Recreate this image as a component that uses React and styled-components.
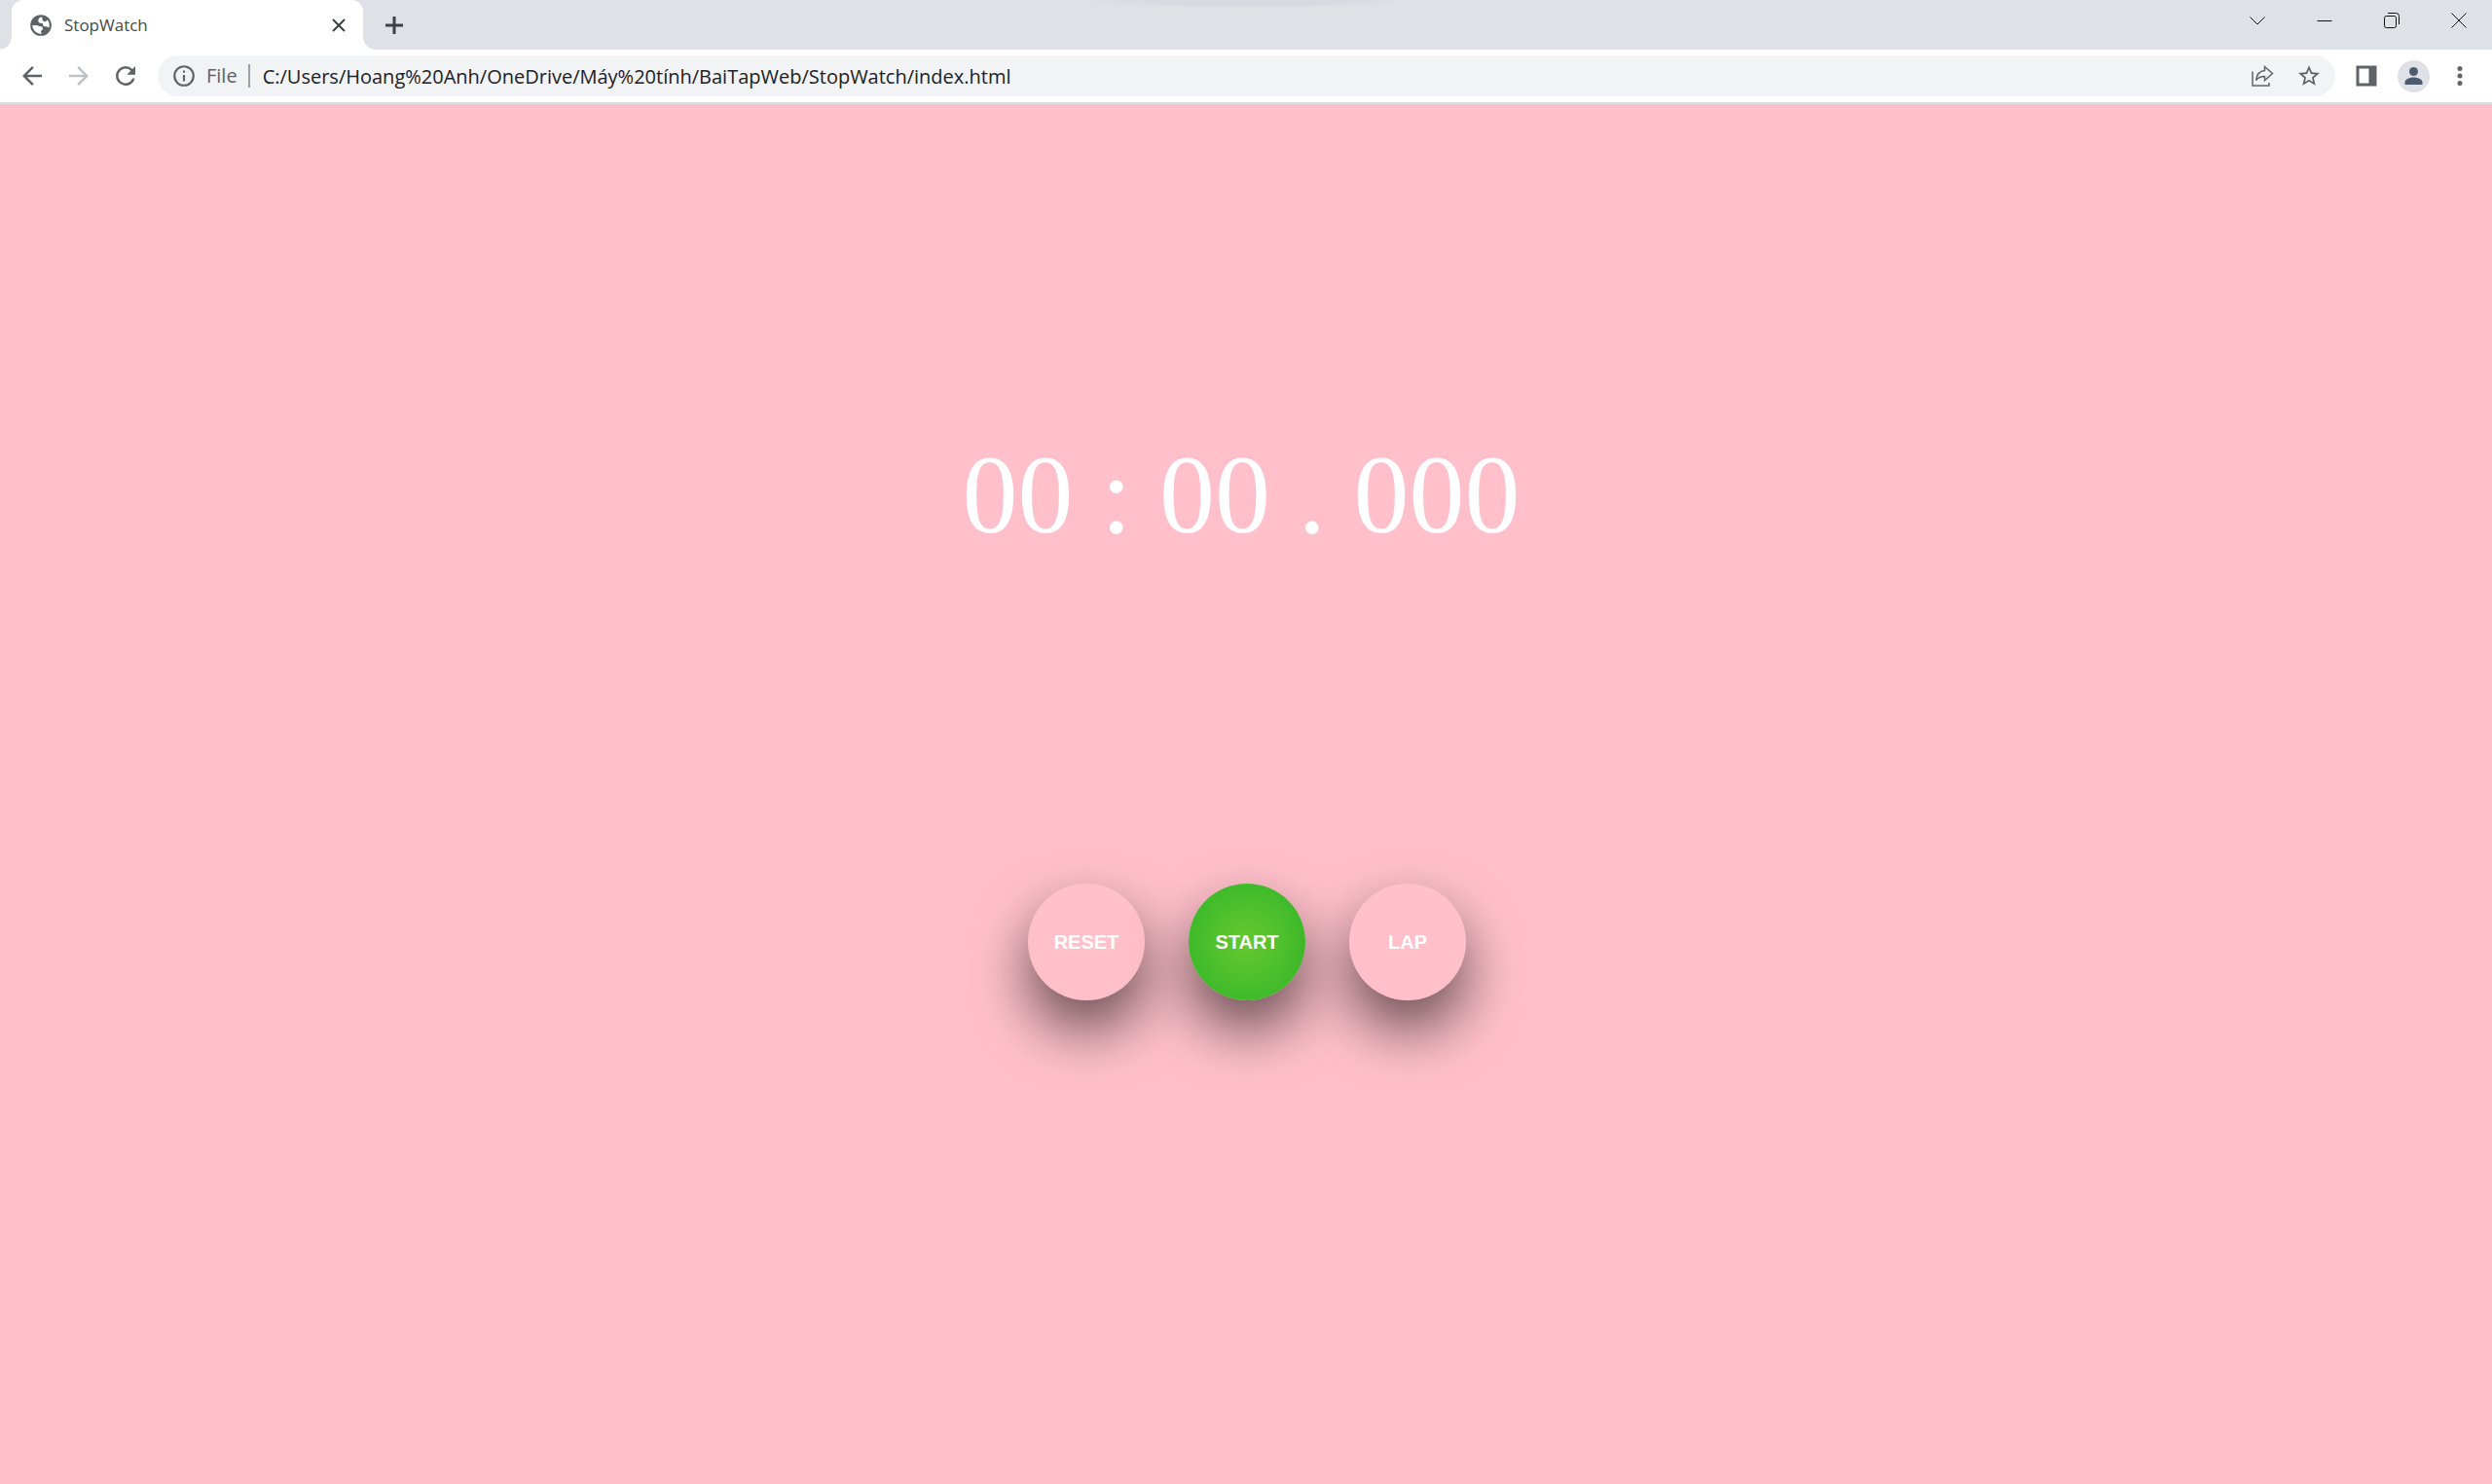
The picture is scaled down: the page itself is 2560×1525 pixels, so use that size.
import React, { useEffect, useRef, useState } from "react";
import styled, { createGlobalStyle } from "styled-components";

const GlobalStyle = createGlobalStyle`
  *, *::before, *::after { box-sizing: border-box; }
  body { margin: 0; background: #ffc0cb; }
`;

const uiFont = `"Open Sans", "Noto Sans", sans-serif`;

const Window = styled.div`
  display: flex;
  flex-direction: column;
  min-height: 100vh;
`;

const TabStrip = styled.header`
  display: flex;
  align-items: stretch;
  height: 51px;
  padding-left: 12px;
  background: radial-gradient(farthest-side at 50% 0, #d7dae0 60%, #dee1e6) top center / 340px 9px no-repeat #dee1e6;
`;

const Tab = styled.div`
  position: relative;
  display: flex;
  align-items: center;
  width: 361px;
  padding: 0 12px 0 17px;
  border-radius: 12px 12px 0 0;
  background: #fff;
  color: #5f6368;

  &::before, &::after {
    content: "";
    position: absolute;
    bottom: 0;
    width: 12px;
    height: 12px;
  }
  &::before {
    right: 100%;
    background: radial-gradient(circle at 0 0, transparent 11px, #fff 12px);
  }
  &::after {
    left: 100%;
    background: radial-gradient(circle at 100% 0, transparent 11px, #fff 12px);
  }
`;

const TabTitle = styled.span`
  flex: 1;
  padding-left: 11px;
  color: #45494d;
  font: 400 17px/24px ${uiFont};
`;

const IconButton = styled.button`
  display: flex;
  align-items: center;
  justify-content: center;
  flex: none;
  width: ${(p) => p.$width || 48}px;
  height: ${(p) => p.$height || 42}px;
  padding: 0;
  border: 0;
  background: none;
  color: ${(p) => p.$color || "#5f6368"};
`;

const NewTab = styled(IconButton)`
  align-self: center;
  margin-left: 8px;
`;

const WindowControls = styled.div`
  display: flex;
  margin-left: auto;
`;

const Toolbar = styled.nav`
  display: flex;
  align-items: center;
  height: 56px;
  padding: 0 9px;
  border-bottom: 2px solid #dadce0;
  background: #fff;
`;

const AddressBar = styled.form`
  display: flex;
  align-items: center;
  flex: 1;
  height: 42px;
  margin: 0 8px 0 9px;
  padding: 0 3px 0 14px;
  border-radius: 21px;
  background: #f1f3f4;
  color: #5f6368;
`;

const Scheme = styled.label`
  margin-left: 10px;
  padding-right: 11px;
  border-right: 2px solid #9aa0a6;
  font: 400 20px/24px ${uiFont};
`;

const Address = styled.input`
  flex: 1;
  min-width: 0;
  height: 36px;
  margin: 0;
  padding: 0 0 0 13px;
  border: 0;
  outline: 0;
  background: none;
  color: #202124;
  font: 400 20px/28px ${uiFont};
`;

const Avatar = styled.span`
  display: flex;
  border-radius: 50%;
  background: #dee1e6;
  color: #4f5b70;
`;

const Page = styled.main`
  display: flex;
  flex: 1;
  flex-direction: column;
  align-items: center;
  padding: 336px 20px 60px 22px;
  background: #ffc0cb;
`;

const Clock = styled.div`
  padding-right: 12px;
  color: #fff;
  font: 400 114px/132px "Liberation Serif", "Times New Roman", serif;
  white-space: nowrap;
`;

const Controls = styled.div`
  display: flex;
  gap: 45px;
  margin-top: 333px;
`;

const RoundButton = styled.button`
  width: 120px;
  height: 120px;
  padding: 0;
  border: 0;
  border-radius: 50%;
  background: ${(p) => (p.$primary ? "radial-gradient(#66c92f, #2fb428)" : "#ffc0cb")};
  box-shadow: 0 30px 60px rgba(0, 0, 0, 0.6);
  color: #fff;
  font: 700 20px/24px "Liberation Sans", Arial, sans-serif;
`;

const Laps = styled.ol`
  margin: 40px 0 0;
  padding: 0;
  list-style: none;
  color: #fff;
  font: 400 30px/40px "Liberation Serif", serif;
`;

function Icon({ size = 30, box = 24, children }) {
  return (
    <svg width={size} height={size} viewBox={`0 0 ${box} ${box}`} fill="currentColor" aria-hidden="true">
      {children}
    </svg>
  );
}

function Line({ d, size = 24, width = 2 }) {
  return (
    <Icon size={size}>
      <path d={d} fill="none" stroke="currentColor" strokeWidth={width} />
    </Icon>
  );
}

const pad = (n, len) => String(n).padStart(len, "0");
const format = (ms) =>
  `${pad(Math.floor(ms / 60000), 2)} : ${pad(Math.floor(ms / 1000) % 60, 2)} . ${pad(ms % 1000, 3)}`;

function StopWatch() {
  const [elapsed, setElapsed] = useState(0);
  const [running, setRunning] = useState(false);
  const [laps, setLaps] = useState([]);
  const base = useRef(0);

  useEffect(() => {
    if (!running) return undefined;
    const started = Date.now() - base.current;
    const id = setInterval(() => {
      base.current = Date.now() - started;
      setElapsed(base.current);
    }, 10);
    return () => clearInterval(id);
  }, [running]);

  const reset = () => {
    base.current = 0;
    setRunning(false);
    setElapsed(0);
    setLaps([]);
  };

  return (
    <Page>
      <Clock>{format(elapsed)}</Clock>
      <Controls>
        <RoundButton type="button" onClick={reset}>RESET</RoundButton>
        <RoundButton type="button" $primary onClick={() => setRunning(!running)}>
          {running ? "STOP" : "START"}
        </RoundButton>
        <RoundButton type="button" onClick={() => running && setLaps([...laps, elapsed])}>LAP</RoundButton>
      </Controls>
      {laps.length > 0 && (
        <Laps>
          {laps.map((lap, i) => <li key={i}>{format(lap)}</li>)}
        </Laps>
      )}
    </Page>
  );
}

export default function App() {
  return (
    <Window>
      <GlobalStyle />
      <TabStrip>
        <Tab>
          <Icon size={26}>
            <circle cx="12" cy="12" r="10" />
            <path
              fill="#fff"
              d="M12.500 4C10.500 4.800 9.500 6 9.500 7.500c0 1.800 1.300 2.500 3 2.500 1 0 1.500.7 1.500 1.500 0 1.200 1 1.700 2.300 1.700 1.500 0 2.700.5 3.300 1.300.3-.8.400-1.600.400-2.500 0-2-.7-3.800-1.900-5.200-.4 1.200-1.300 1.700-2.400 1.700-1.400 0-2.200-.8-2.200-2 0-.9-.3-1.700-1-2.500zM4 12c0 4.400 3.600 8 8 8 .4 0 .8 0 1.200-.1-1-.6-1.400-1.400-1.200-2.300.2-.8 1.800-1 1.800-2.400 0-1.400-1-2.200-2.600-2.200-1.500 0-1.700-1-3.200-1z"
            />
          </Icon>
          <TabTitle>StopWatch</TabTitle>
          <IconButton type="button" aria-label="Close tab" $width={26} $color="#3c4043">
            <Line d="M6 6 18 18M18 6 6 18" />
          </IconButton>
        </Tab>
        <NewTab type="button" aria-label="New tab" $color="#3c4043">
          <Line d="M12 3v18M3 12h18" width={3} />
        </NewTab>
        <WindowControls>
          <IconButton type="button" aria-label="Search tabs" $width={69} $color="#111">
            <Line d="M4.500 8.500 12 16 19.500 8.500" width={1} />
          </IconButton>
          <IconButton type="button" aria-label="Minimize" $width={69} $color="#111">
            <Line d="M4.500 12.500h15" width={1} />
          </IconButton>
          <IconButton type="button" aria-label="Restore" $width={69} $color="#111">
            <Line
              d="M6.500 7.500h8a2 2 0 0 1 2 2v8a2 2 0 0 1-2 2h-8a2 2 0 0 1-2-2v-8a2 2 0 0 1 2-2zM8 4.500h8.500a3 3 0 0 1 3 3V16"
              width={1}
            />
          </IconButton>
          <IconButton type="button" aria-label="Close" $width={69} $color="#111">
            <Line d="M4.500 4.500l15 15M19.500 4.500l-15 15" width={1} />
          </IconButton>
        </WindowControls>
      </TabStrip>

      <Toolbar>
        <IconButton type="button" aria-label="Back">
          <Icon><path d="M20 11H7.830l5.590-5.590L12 4l-8 8 8 8 1.410-1.410L7.830 13H20v-2z" /></Icon>
        </IconButton>
        <IconButton type="button" aria-label="Forward" $color="#bdc1c6">
          <Icon><path d="M12 4l-1.410 1.410L16.170 11H4v2h12.170l-5.580 5.590L12 20l8-8z" /></Icon>
        </IconButton>
        <IconButton type="button" aria-label="Reload">
          <Icon>
            <path d="M17.650 6.350A7.960 7.960 0 0 0 12 4a8 8 0 1 0 7.730 10h-2.080A6 6 0 1 1 12 6c1.660 0 3.140.69 4.220 1.780L13 11h7V4l-2.350 2.350z" />
          </Icon>
        </IconButton>
        <AddressBar onSubmit={(e) => e.preventDefault()}>
          <Icon size={26}>
            <path d="M11 7h2v2h-2zm0 4h2v6h-2zm1-9a10 10 0 1 0 0 20 10 10 0 0 0 0-20zm0 18a8 8 0 1 1 0-16 8 8 0 0 1 0 16z" />
          </Icon>
          <Scheme htmlFor="address">File</Scheme>
          <Address
            id="address"
            spellCheck={false}
            defaultValue="C:/Users/Hoang%20Anh/OneDrive/Máy%20tính/BaiTapWeb/StopWatch/index.html"
          />
          <IconButton type="button" aria-label="Share">
            <Icon size={24}>
              <g fill="none" stroke="currentColor" strokeWidth="1.500">
                <path d="M2 7.500V22h17v-3" />
                <path d="M14.500 2.500 22.500 9.500l-8 7v-4c-4 0-7 1.200-8.800 4C6.200 10.800 9 7 14.500 6.500z" />
              </g>
            </Icon>
          </IconButton>
          <IconButton type="button" aria-label="Bookmark this page">
            <Icon size={26}>
              <path d="M22 9.240l-7.190-.62L12 2 9.190 8.630 2 9.240l5.460 4.730L5.820 21 12 17.270 18.180 21l-1.630-7.030L22 9.240zM12 15.400l-3.760 2.270 1-4.280-3.320-2.880 4.380-.38L12 6.100l1.710 4.040 4.380.38-3.320 2.880 1 4.280L12 15.400z" />
            </Icon>
          </IconButton>
        </AddressBar>
        <IconButton type="button" aria-label="Side panel">
          <Icon size={24}><path d="M1.500 1.500h21v21h-21zM4.500 4.500v15h10v-15z" fillRule="evenodd" /></Icon>
        </IconButton>
        <IconButton type="button" aria-label="Profile">
          <Avatar>
            <Icon size={33} box={33}>
              <circle cx="16.500" cy="11.500" r="4.500" />
              <path d="M7.500 25v-2.500c0-3.500 5.500-5 9-5s9 1.500 9 5V25z" />
            </Icon>
          </Avatar>
        </IconButton>
        <IconButton type="button" aria-label="Menu">
          <Icon size={24}>
            <circle cx="12" cy="4.500" r="2.500" />
            <circle cx="12" cy="12" r="2.500" />
            <circle cx="12" cy="19.500" r="2.500" />
          </Icon>
        </IconButton>
      </Toolbar>

      <StopWatch />
    </Window>
  );
}
